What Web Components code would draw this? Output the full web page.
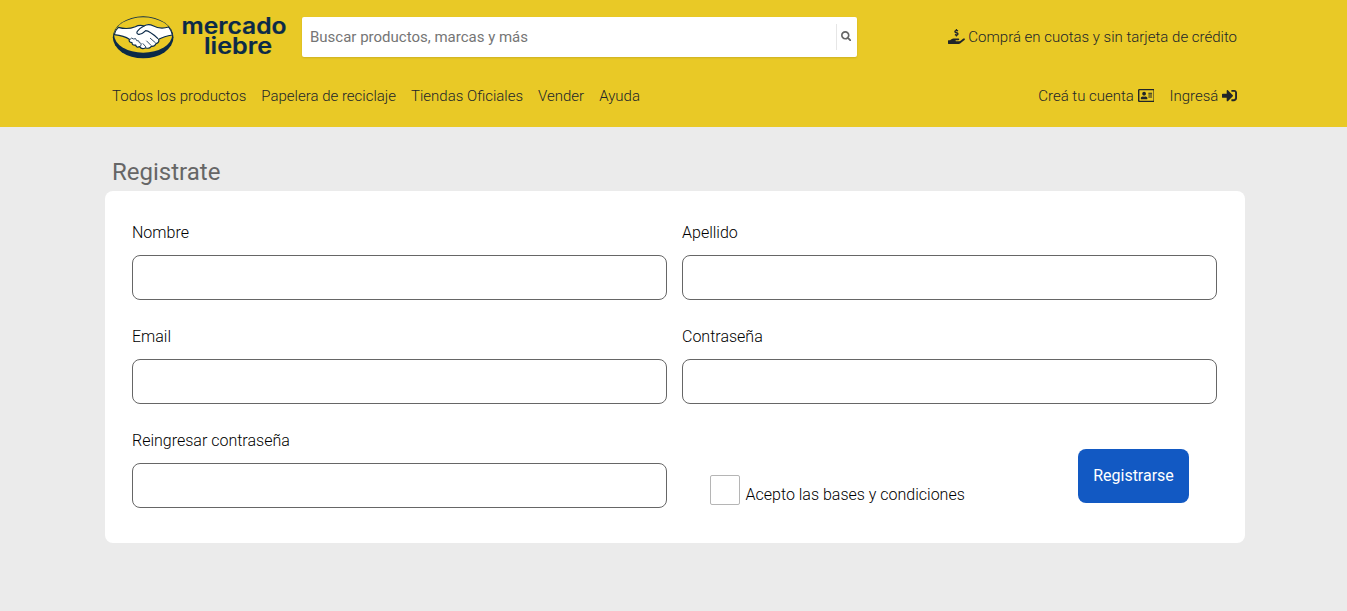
<!DOCTYPE html>
<html lang="es">
<head>
<meta charset="utf-8">
<title>Mercado Liebre</title>
<style>
html,body{margin:0;min-height:100%;background:#ebebeb}
body{font:300 16px/24px Roboto,"Liberation Sans",sans-serif;color:#212529}
</style>
</head>
<body>
<ml-page></ml-page>
<script>
const define=(name,html)=>{
  const t=document.createElement('template');
  t.innerHTML=html;
  customElements.define(name,class extends HTMLElement{
    constructor(){super();this.attachShadow({mode:'open'}).append(t.content.cloneNode(true));}
  });
};

const icons={
  search:['0 0 512 512','M505 442.7L405.3 343c-4.5-4.5-10.6-7-17-7H372c27.6-35.3 44-79.7 44-128C416 93.1 322.9 0 208 0S0 93.1 0 208s93.1 208 208 208c48.3 0 92.7-16.4 128-44v16.3c0 6.4 2.5 12.5 7 17l99.7 99.7c9.4 9.4 24.6 9.4 33.9 0l28.3-28.3c9.4-9.4 9.4-24.6.1-34zM208 336c-70.7 0-128-57.2-128-128 0-70.7 57.2-128 128-128 70.7 0 128 57.2 128 128 0 70.7-57.2 128-128 128z'],
  login:['0 0 512 512','M416 448h-84c-6.6 0-12-5.4-12-12v-40c0-6.6 5.4-12 12-12h84c17.7 0 32-14.3 32-32V160c0-17.7-14.3-32-32-32h-84c-6.6 0-12-5.4-12-12V76c0-6.6 5.4-12 12-12h84c53 0 96 43 96 96v192c0 53-43 96-96 96zm-47-201L201 79c-15-15-41-4.5-41 17v96H24c-13.3 0-24 10.7-24 24v96c0 13.3 10.7 24 24 24h136v96c0 21.5 26 32 41 17l168-168c9.3-9.4 9.3-24.6 0-34z'],
  card:['0 0 576 512','M528 32H48C21.5 32 0 53.5 0 80v352c0 26.5 21.5 48 48 48h480c26.5 0 48-21.5 48-48V80c0-26.5-21.5-48-48-48zm0 400H48V80h480v352zM208 256c35.3 0 64-28.7 64-64s-28.7-64-64-64-64 28.7-64 64 28.7 64 64 64zm-89.6 128h179.2c12.4 0 22.4-8.6 22.4-19.2v-19.2c0-31.8-30.1-57.6-67.2-57.6-10.8 0-18.7 8-44.8 8-26.9 0-33.4-8-44.8-8-37.1 0-67.2 25.8-67.2 57.6v19.2c0 10.6 10 19.2 22.4 19.2zM360 320h112c4.4 0 8-3.6 8-8v-16c0-4.4-3.6-8-8-8H360c-4.4 0-8 3.6-8 8v16c0 4.4 3.6 8 8 8zm0-64h112c4.4 0 8-3.6 8-8v-16c0-4.4-3.6-8-8-8H360c-4.4 0-8 3.6-8 8v16c0 4.4 3.6 8 8 8zm0-64h112c4.4 0 8-3.6 8-8v-16c0-4.4-3.6-8-8-8H360c-4.4 0-8 3.6-8 8v16c0 4.4 3.6 8 8 8z'],
  credit:['0 0 576 512','M257.6 144.3l50 14.3c3.6 1 6.1 4.4 6.1 8.1 0 4.6-3.8 8.4-8.4 8.4h-32.8c-3.6 0-7.1-.8-10.3-2.2-4.8-2.2-10.4-1.7-14.1 2l-17.5 17.5c-5.3 5.3-4.7 14.3 1.5 18.4 9.5 6.3 20.3 10.1 31.8 11.5V240c0 8.8 7.2 16 16 16h16c8.8 0 16-7.2 16-16v-17.6c30.3-3.6 53.3-31 49.3-63-2.9-23-20.7-41.3-42.9-47.7l-50-14.3c-3.6-1-6.1-4.4-6.1-8.1 0-4.6 3.8-8.4 8.4-8.4h32.8c3.6 0 7.1.8 10.3 2.2 4.8 2.2 10.4 1.7 14.1-2l17.5-17.5c5.3-5.3 4.7-14.3-1.5-18.4-9.5-6.3-20.3-10.1-31.8-11.5V16c0-8.8-7.2-16-16-16h-16c-8.8 0-16 7.2-16 16v17.6c-30.3 3.6-53.3 31-49.3 63 2.9 23 20.6 41.3 42.9 47.7zM565.3 328.1c-11.8-10.7-30.2-10-42.6 0L430.3 402c-11.3 9.1-25.4 14-40 14H272c-8.8 0-16-7.2-16-16s7.2-16 16-16h78.3c15.9 0 30.7-10.9 33.3-26.6 3.3-20-12.1-37.4-31.6-37.4H192c-27 0-53.1 9.3-74.1 26.3L71.4 384H16c-8.8 0-16 7.2-16 16v96c0 8.8 7.2 16 16 16h356.8c14.5 0 28.6-4.9 40-14L564 377c15.2-12.1 16.4-35.3 1.3-48.9z']
};
customElements.define('ml-icon',class extends HTMLElement{
  constructor(){super();this.attachShadow({mode:'open'});}
  connectedCallback(){
    const [box,d]=icons[this.getAttribute('name')];
    this.shadowRoot.innerHTML=`<style>:host{display:inline-block;line-height:0;vertical-align:-2px}svg{height:var(--icon-size,15px);fill:currentColor;display:block}</style><svg viewBox="${box}"><path d="${d}"/></svg>`;
  }
});

define('ml-logo',`
<style>
:host{display:block;width:185px;height:50px}
svg{display:block}
text{font:600 22.5px Inter,Lato,sans-serif;fill:#0b2a48;stroke:#0b2a48;stroke-width:.2;stroke-linejoin:round}
</style>
<svg width="185" height="50" viewBox="0 0 185 50">
  <g transform="scale(.33333)" stroke-linecap="round" stroke-linejoin="round">
    <ellipse cx="99.500" cy="76" rx="91" ry="63" fill="#0b2a48"/>
    <ellipse cx="99.500" cy="69" rx="87" ry="53" fill="#e9c926"/>
    <path d="M25 46Q52 54 76 44Q89 37 102 42Q115 34 129 41Q150 53 176 45Q184 55 187 69Q162 73 146 82Q149 91 138 95Q134 104 124 103Q117 112 107 107Q95 114 89 104Q79 108 77 99Q66 101 66 92Q55 91 58 82Q43 71 13 68Q15 55 25 46Z" fill="#fff" stroke="#0b2a48" stroke-width="3.500"/>
    <path d="M102 42Q91 47 82 58Q78 65 86 67Q94 68 107 56Q119 57 143 79" fill="none" stroke="#0b2a48" stroke-width="3.500"/>
    <path d="M121 79L136 92M110 87L123 100M99 95L107 104M59 83Q65 74 71 81Q78 76 80 86Q88 84 88 92Q98 93 91 103" fill="none" stroke="#0b2a48" stroke-width="2.500"/>
  </g>
  <text x="71.500" y="22" textLength="105" lengthAdjust="spacingAndGlyphs">mercado</text>
  <text x="94" y="42.200" textLength="68" lengthAdjust="spacingAndGlyphs">liebre</text>
</svg>`);

define('ml-search',`
<style>
:host{display:flex;box-sizing:border-box;width:555px;height:40px;background:#fff;border-radius:2px;box-shadow:0 1px 2px rgba(0,0,0,.12);color:#666;--icon-size:10.5px}
input{flex:1;min-width:0;border:0;outline:0;background:none;padding:0 8px;font:400 15px Roboto,sans-serif}
input::placeholder{color:#757575;opacity:1}
button{width:21px;height:26px;margin-top:7px;padding:0 2px 2px 0;border:0;border-left:1px solid #e6e6e6;background:none;color:inherit;display:grid;place-items:center}
</style>
<input placeholder="Buscar productos, marcas y más"><button aria-label="Buscar"><ml-icon name="search"></ml-icon></button>`);

define('ml-link',`
<style>:host{display:block;white-space:nowrap}a{color:inherit;text-decoration:none}</style>
<a><slot></slot></a>`);

define('ml-header',`
<style>
:host{display:block;box-sizing:border-box;height:127px;padding:12px 110px 0 112px;background:#e9c926;font-size:15px}
.top{display:flex;height:50px}
ml-logo{margin-left:-2px}
ml-search{margin:5px 0 0 7px}
.promo{margin:13px 0 0 auto}
nav{display:flex;gap:15px;margin-top:22px}
.push{margin-left:auto}
</style>
<div class="top"><ml-logo></ml-logo><ml-search></ml-search><ml-link class="promo"><ml-icon name="credit"></ml-icon> Comprá en cuotas y sin tarjeta de crédito</ml-link></div>
<nav><ml-link>Todos los productos</ml-link><ml-link>Papelera de reciclaje</ml-link><ml-link>Tiendas Oficiales</ml-link><ml-link>Vender</ml-link><ml-link>Ayuda</ml-link><ml-link class="push">Creá tu cuenta <ml-icon name="card"></ml-icon></ml-link><ml-link>Ingresá <ml-icon name="login"></ml-icon></ml-link></nav>`);

define('ml-field',`
<style>
:host{display:block}
label{display:block;padding-top:1px}
input{display:block;box-sizing:border-box;width:100%;height:45px;margin-top:10px;border:1px solid #666;border-radius:8px;background:#fff;padding:0 12px;font:inherit}
</style>
<label><slot></slot><input></label>`);

define('ml-check',`
<style>
:host{display:block}
label{display:flex;align-items:flex-start;gap:5.500px}
input{appearance:none;box-sizing:border-box;width:30px;height:30px;margin:0;border:1px solid #b5b5b5;border-radius:2px;background:#fff}
span{margin-top:8px}
</style>
<label><input type="checkbox"><span><slot></slot></span></label>`);

define('ml-button',`
<style>
:host{display:block}
button{width:111px;height:54px;border:0;border-radius:8px;padding:0 0 2px;background:#1259c3;color:#fff;font:400 16px Roboto,sans-serif}
</style>
<button><slot></slot></button>`);

define('ml-page',`
<style>
:host{display:block}
main{padding:30px 102px 0 105px}
h1{margin:0 0 4px 7px;font-weight:400;font-size:24px;line-height:30px;color:#666}
form{box-sizing:border-box;height:352px;padding:29px 28px 0 27px;background:#fff;border-radius:8px;display:grid;grid-template-columns:535px 535px;grid-auto-rows:80px;gap:24px 15px;color:#000}
.actions{display:flex;justify-content:space-between;align-items:flex-start;padding:0 28px}
ml-check{margin-top:47px}
ml-button{margin-top:21px}
</style>
<ml-header></ml-header>
<main><h1>Registrate</h1>
<form>
<ml-field>Nombre</ml-field><ml-field>Apellido</ml-field>
<ml-field>Email</ml-field><ml-field>Contraseña</ml-field>
<ml-field>Reingresar contraseña</ml-field>
<div class="actions"><ml-check>Acepto las bases y condiciones</ml-check><ml-button>Registrarse</ml-button></div>
</form></main>`);
</script>
</body>
</html>
